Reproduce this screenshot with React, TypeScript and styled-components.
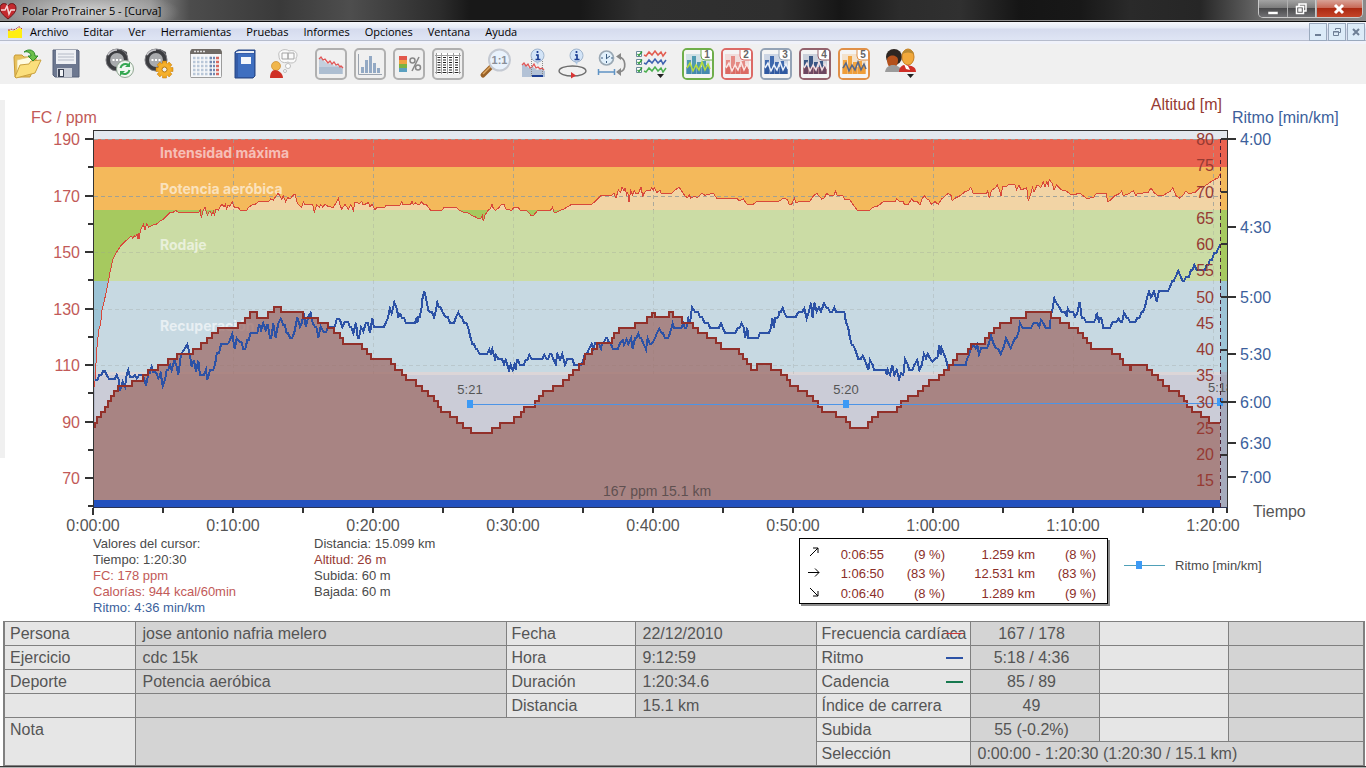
import React from "react";
import styled, { createGlobalStyle } from "styled-components";

const GlobalStyle = createGlobalStyle`
  * { box-sizing: border-box; }
  body {
    margin: 0;
    background: #ffffff;
    font-family: "Liberation Sans", Arial, sans-serif;
    color: #555555;
  }
  button { font: inherit; color: inherit; padding: 0; border: 0; background: none; cursor: default; }
`;

const UI_FONT = `"Open Sans", "Segoe UI", sans-serif`;

const Page = styled.div`
  display: flex;
  flex-direction: column;
  min-height: 100vh;
  overflow: hidden;
`;

/* ---------- window chrome ---------- */

const TitleBar = styled.header`
  display: flex;
  align-items: flex-start;
  height: 22px;
  padding-right: 3px;
  border-bottom: 1px solid #0c0c0c;
  box-shadow: inset 0 -1px 0 #8d8d8d;
  background:
    radial-gradient(ellipse 90px 22px at 90px 12px, rgba(235, 235, 235, 0.75), rgba(200, 200, 200, 0.45) 60%, transparent 100%),
    linear-gradient(90deg, #8a8a8a 0, #8e8e8e 150px, #4c4c4c 190px, #3a3a3a 280px, #4e4e4e 350px, #2c2c2c 440px, #181818 470px,
      #181818 580px, #303030 640px, #2e2e2e 780px, #161616 840px, #2c2c2c 900px, #303030 960px, #151515 1020px, #181818 1080px,
      #2a2a2a 1130px, #262626 1200px, #6a6a6a 1262px, #8a8a8a 1366px);
`;

const Title = styled.h1`
  display: flex;
  align-items: center;
  flex: 1;
  gap: 5px;
  height: 21px;
  margin: 0;
  font: 400 11px/20px ${UI_FONT};
  color: #000000;
`;

const WindowButtons = styled.div`
  display: flex;
  height: 18px;
  border: 1px solid #c9c9c9;
  border-top: 0;
  border-radius: 0 0 5px 5px;
  overflow: hidden;
`;

const WindowButton = styled.button<{ $close?: boolean }>`
  display: flex;
  align-items: center;
  justify-content: center;
  width: ${(p) => (p.$close ? 47 : 28)}px;
  height: 17px;
  border-left: ${(p) => (p.$close ? "1px solid #c9c9c9" : "0")};
  background: ${(p) =>
    p.$close
      ? "linear-gradient(#d8a296 0, #c86a58 45%, #ac2a12 50%, #c44428 100%)"
      : "linear-gradient(#a3a3a3 0, #7d7d7d 45%, #4a4a4c 50%, #717174 100%)"};
  & + & { box-shadow: inset 1px 0 0 #b0b0b0; }
`;

const MenuBar = styled.nav`
  display: flex;
  align-items: center;
  height: 22px;
  padding-left: 8px;
  background: linear-gradient(#f6f8fc 0, #e4eaf6 6px, #d5dbee 7px, #dfe5f4 18px, #b6bccc 18px, #b6bccc 19px, #f0f2fa 19px, #f0f2fa 22px);
`;

const MenuList = styled.div`
  display: flex;
  flex: 1;
  gap: 15px;
  margin-left: 8px;
  padding-bottom: 2px;
`;

const MenuItem = styled.button`
  height: 18px;
  font: 400 11px/18px ${UI_FONT};
  color: #000000;
`;

const MdiButtons = styled.div`
  display: flex;
  align-self: flex-start;
  gap: 1px;
  padding-top: 1px;
  padding-right: 1px;
`;

const MdiButton = styled.button`
  display: flex;
  align-items: center;
  justify-content: center;
  width: 18px;
  height: 18px;
  border: 1px solid #9aa9bd;
  background: #dcebf8;
`;

const Toolbar = styled.div`
  display: flex;
  align-items: center;
  gap: 15px;
  height: 40px;
  padding-left: 11px;
  background: #f0f0f0;
`;

const ToolGroup = styled.div<{ $spaced?: boolean }>`
  display: flex;
  gap: 7px;
  margin-right: ${(p) => (p.$spaced ? 7 : 0)}px;
`;

const ToolButton = styled.button<{ $frame?: string }>`
  width: 32px;
  height: 32px;
  border: ${(p) => (p.$frame ? `2px solid ${p.$frame}` : "0")};
  border-radius: 5px;
  overflow: hidden;
  svg { display: block; margin: ${(p) => (p.$frame ? "-2px" : "0")}; }
`;

function Icon({ children, size = 32 }: { children: React.ReactNode; size?: number }) {
  return (
    <svg width={size} height={size} viewBox="0 0 32 32" fill="none" aria-hidden="true">
      {children}
    </svg>
  );
}

const OpenIcon = (
  <Icon>
    <path d="M3 9l1-2h7l2 2h12v6l-6 14H4z" fill="#e8c05a" stroke="#c79a35" />
    <path d="M6 12l17-4 2 14-19 6z" fill="#fffbe0" stroke="#e0c878" strokeWidth=".7" />
    <path d="M4 29L9 17l9-1 2-3 10-1-6 13-19 5z" fill="#fbdf7c" stroke="#c9a13f" />
    <path d="M13 4c5-4 11-2 11 4h3l-5 5-5-5h3c0-3-3-5-7-4z" fill="#6cc04a" stroke="#2f8a2a" />
  </Icon>
);
const SaveIcon = (
  <Icon>
    <path d="M3 2h25l1 1v26H5l-2-2z" fill="#6d7890" stroke="#566078" />
    <path d="M6 2h20v14H6z" fill="#eef0f4" />
    <path d="M8 6h16M8 9h16M8 12h16" stroke="#b4bac6" />
    <path d="M7 20h15v9H7z" fill="#c9ced8" />
    <path d="M8 21h6v8H8z" fill="#3c4456" />
    <path d="M10 22h3v6h-3z" fill="#f2f4f7" />
  </Icon>
);
const watch = (
  <>
    <path d="M9 3l8-2 6 3 1 16-9 3-8-3z" fill="#55565a" />
    <circle cx="13" cy="12" r="11" fill="#3c3d41" stroke="#7d7d82" />
    <circle cx="13" cy="12" r="7" fill="#a9abae" />
    <path d="M8.500 12h2M12 12h2M15.500 12h2" stroke="#fff" strokeWidth="2" />
    <path d="M4 7c2-3 5-5 9-5" stroke="#c8c8cc" strokeWidth="1.500" />
  </>
);
const SyncIcon = (
  <Icon>
    {watch}
    <circle cx="21" cy="21" r="8.500" fill="#f1f7f1" stroke="#8fa691" />
    <path d="M16.500 20a5 5 0 0 1 8-3M25.500 22a5 5 0 0 1-8 3" stroke="#35a852" strokeWidth="2" />
    <path d="M26 14v5h-5zM16 28v-5h5z" fill="#35a852" />
  </Icon>
);
const SettingsIcon = (
  <Icon>
    {watch}
    {[0, 45, 90, 135].map((a) => (
      <path key={a} d="M19.500 13h4v17h-4z" fill="#f0a51c" stroke="#c27a0c" strokeWidth=".5" transform={`rotate(${a} 21.500 21.500)`} />
    ))}
    <circle cx="21.500" cy="21.500" r="6.500" fill="#f5b02c" />
    <circle cx="21.500" cy="21.500" r="2.500" fill="#efefef" stroke="#b87810" />
  </Icon>
);
const CalendarIcon = (
  <Icon>
    <path d="M.500 1.500h31v28h-31z" fill="#f6f7f9" stroke="#9c9c9c" />
    <path d="M0 1h32v5H0z" fill="#706b66" />
    <path d="M4 3.500h11" stroke="#ddd" strokeWidth="1.500" strokeDasharray="2 1" />
    {[10, 14, 18, 22, 26].map((y) => (
      <g key={y} strokeWidth="2.500">
        <path d={`M3 ${y}h18`} stroke="#b9c7d8" strokeDasharray="2.500 1.500" />
        <path d={`M20 ${y}h5`} stroke="#7288b0" strokeDasharray="2 1" />
        <path d={`M26 ${y}h3`} stroke="#d76a62" />
      </g>
    ))}
  </Icon>
);
const BookIcon = (
  <Icon>
    <path d="M6 4l3-2h17v26l-2 2H6z" fill="#345ca8" stroke="#274784" />
    <path d="M9 6h16v23H9z" fill="#3f6fc0" />
    <path d="M7 4l3-1h15v2H7z" fill="#e9edf4" />
    <path d="M12 9h10v7H12z" fill="#f4f7fb" />
  </Icon>
);
const CoachIcon = (
  <Icon>
    <circle cx="8" cy="18" r="4.500" fill="#f0b64c" stroke="#c98a2c" strokeWidth=".7" />
    <path d="M2 30c0-5 2-8 5-8s8 3 8 8z" fill="#cf3026" />
    <path d="M11 8c-2-6 7-8 10-5 6-2 10 3 7 7 1 5-5 6-8 4-5 2-9-1-9-6z" fill="#fafafa" stroke="#bdbdbd" />
    <path d="M14 5h6v6h-6zM20 5h6v6h-6z" stroke="#a4a4a4" />
    <circle cx="20" cy="18" r="2.500" fill="#fff" stroke="#bdbdbd" />
    <circle cx="17" cy="23" r="1.500" fill="#fff" stroke="#bdbdbd" />
  </Icon>
);
const AreaIcon = (
  <Icon>
    <path d="M4 11l3-1 3 4 3 2 4-1 2 3 3-1 5 4v5H4z" fill="#c3cfdd" />
    <path d="M4 19h24v7H4z" fill="#9fb2c9" opacity=".6" />
    <path d="M4 11l2-2 2 3 2-1 3 4 2-2 2 3 2-2 2 3 2-1 2 3 1-1 2 2" stroke="#e25555" strokeWidth="1.300" />
  </Icon>
);
const HistogramIcon = (
  <Icon>
    <path d="M4.500 6v20.500H28" stroke="#9aa3af" />
    <path d="M7 19h3v6H7zM11 12h3v13h-3zM15 8h3v17h-3zM19 15h3v10h-3zM23 20h3v5h-3z" fill="#93a9c4" />
  </Icon>
);
const ZonesIcon = (
  <Icon>
    <path d="M6 8h8v4H6z" fill="#e2584c" />
    <path d="M6 12h8v4H6z" fill="#f0a040" />
    <path d="M6 16h8v4H6z" fill="#7cb342" />
    <path d="M6 20h8v4H6z" fill="#5aa0c0" />
    <circle cx="19.500" cy="12.500" r="2.500" stroke="#888" strokeWidth="1.500" />
    <circle cx="25" cy="19.500" r="2.500" stroke="#888" strokeWidth="1.500" />
    <path d="M26 9l-7 14" stroke="#888" strokeWidth="1.500" />
  </Icon>
);
const TableIcon = (
  <Icon>
    <path d="M4 5h24v21H4z" fill="#fff" />
    <path d="M4.500 5v21M9.500 5v21M15.500 5v21M21.500 5v21M27.500 5v21M3 7.500h26M3 24.500h26" stroke="#a0a0a0" />
    <path d="M7 9v16M12.500 9v16M18.500 9v16M24.500 9v16" stroke="#222" strokeWidth="3" strokeDasharray="1 1.500" />
  </Icon>
);
const ZoomIcon = (
  <Icon>
    <path d="M4 27l8-8" stroke="#9a6228" strokeWidth="5" strokeLinecap="round" />
    <path d="M4 26l8-8" stroke="#e0a860" strokeWidth="1.500" />
    <circle cx="20.500" cy="12" r="10.500" fill="#e9f2fc" stroke="#c4c9d2" strokeWidth="2" />
    <text x="20.500" y="16" fontSize="11" fontWeight="700" fill="#8a8f99" textAnchor="middle" fontFamily="Liberation Sans">1:1</text>
  </Icon>
);
const infoBubble = (
  <>
    <path d="M17 13l3 4 1-4z" fill="#b4cce8" />
    <circle cx="19.500" cy="7.500" r="6.500" fill="#d3e4f7" stroke="#a0b4cc" />
    <path d="M19.500 3v2M18 7H20v4.500M17.500 11.500h5" stroke="#1d3f94" strokeWidth="1.700" />
  </>
);
const InfoCurveIcon = (
  <Icon>
    <path d="M4 17l3-1 4 4 4-1 4 3 4-1 4 2v6H4z" fill="#b3c2d6" />
    <path d="M4 17l2-2 2 3 2-2 2 4 2-1 2-3 2 4 2-1 2 2 2-1 2 2" stroke="#e25555" strokeWidth="1.300" />
    <path d="M13.500 7v22M24.500 7v22" stroke="#888" strokeDasharray="1 1" />
    <path d="M14 28h11" stroke="#1d3f94" strokeWidth="2" />
    {infoBubble}
  </Icon>
);
const InfoLapIcon = (
  <Icon>
    <ellipse cx="15.500" cy="23" rx="13.500" ry="5" stroke="#6d6d6d" strokeWidth="1.300" />
    <path d="M14 24l5 3.500-5 3z" fill="#d93434" />
    {infoBubble}
  </Icon>
);
const TimeDistanceIcon = (
  <Icon>
    <circle cx="10.500" cy="10" r="7" fill="#e1f0fb" stroke="#9aa8b4" strokeWidth="1.700" />
    <path d="M10.500 11v-5M10 11l4-3M5 10h2M15 10h2M10.500 15v-2" stroke="#3d5d80" />
    <path d="M2.500 21v6M18.500 21v6M2 24h17" stroke="#5f93c4" strokeWidth="1.500" />
    <path d="M23 9c7 1 8 13 1 15" stroke="#888" strokeWidth="1.700" />
    <path d="M25 5v7l-5-3.500zM25 20v8l-5-4z" fill="#888" />
  </Icon>
);
const CurvesIcon = (
  <Icon>
    {[
      ["#e25c50", 5],
      ["#3f62b0", 13],
      ["#4caf50", 21],
    ].map(([c, y]) => (
      <g key={c} transform={`translate(1 ${Number(y) - 3})`}>
        <path d="M.500 1.500h5v5h-5z" fill="#fff" stroke="#6a8a9a" />
        <path d="M1.500 4l1.500 1.500 3-4" stroke="#2d9a3a" strokeWidth="1.300" />
        <path d="M8 5l2 1 3-4 3 3 3-4 3 4 3-3 2 4 3-4" stroke={String(c)} strokeWidth="1.500" />
      </g>
    ))}
    <path d="M22 26h7l-3.500 4z" fill="#222" />
  </Icon>
);

const VIEWS = [
  { frame: "#6fae4a", bar: "#4f9ab0", dark: "#3f7fae", line: "#b5dc3c" },
  { frame: "#dc6a66", bar: "#e58a84", dark: "#d3574f", line: "#fbe6e4" },
  { frame: "#94a3b6", bar: "#3e68ad", dark: "#27509a", line: "#e9f0fa" },
  { frame: "#93626d", bar: "#3a5684", dark: "#8c3c48", line: "#f1dfe2" },
  { frame: "#e09048", bar: "#f2a541", dark: "#ec9a34", line: "#56688a" },
];

const CoachesIcon = (
  <Icon>
    <circle cx="9" cy="9" r="8" fill="#2d2622" />
    <path d="M2 12c0-6 11-6 11 0s-3 8-6 8-5-4-5-8z" fill="#b4511c" />
    <path d="M0 24c1-5 4-7 8-7s8 2 9 7z" fill="#9b9b9b" />
    <ellipse cx="23" cy="9" rx="6" ry="8" fill="#f1a93c" stroke="#c67f22" />
    <path d="M17 6c1-6 11-6 12 0-4-2-8-2-12 0z" fill="#b98a34" />
    <path d="M14 24c0-5 4-8 8-7s9 1 9 7z" fill="#cf2f27" />
    <path d="M19 16l4 2 2 4-4-1z" fill="#fff" />
    <path d="M22 26h7l-3.500 4z" fill="#222" />
  </Icon>
);

const TOOLS: { name: string; icon: React.ReactNode; frame?: string }[][] = [
  [
    { name: "Abrir", icon: OpenIcon },
    { name: "Guardar", icon: SaveIcon },
  ],
  [
    { name: "Transferir", icon: SyncIcon },
    { name: "Configurar", icon: SettingsIcon },
  ],
  [
    { name: "Calendario", icon: CalendarIcon },
    { name: "Diario", icon: BookIcon },
    { name: "Asesor", icon: CoachIcon },
  ],
  [
    { name: "Curva", icon: AreaIcon, frame: "#b0b0b0" },
    { name: "Distribución", icon: HistogramIcon, frame: "#b0b0b0" },
    { name: "Zonas", icon: ZonesIcon, frame: "#b0b0b0" },
    { name: "Tabla", icon: TableIcon, frame: "#b0b0b0" },
  ],
  [
    { name: "Escala", icon: ZoomIcon },
    { name: "Información", icon: InfoCurveIcon },
    { name: "Vueltas", icon: InfoLapIcon },
    { name: "Tiempo y distancia", icon: TimeDistanceIcon },
    { name: "Curvas", icon: CurvesIcon },
  ],
  VIEWS.map((v, i) => ({
    name: `Vista ${i + 1}`,
    frame: v.frame,
    icon: (
      <Icon>
        <path d="M2 2h28v28H2z" fill="#f4f4f4" />
        <path d="M4 6h24v20H4z" fill={v.bar} opacity=".22" />
        <path d="M5 12h4v14H5zM10 8h4v18h-4zM15 14h4v12h-4zM20 13h4v13h-4zM24 17h3v9h-3z" fill={v.bar} />
        <path d="M4 19h24v7H4z" fill={v.dark} opacity=".6" />
        <path d="M5 20l3-5 3 8 3-6 3 5 3-8 3 8 3-6 2 5" stroke={v.line} strokeWidth="1.500" />
        <path d="M19 0h13v12h-9q-4 0-4-4z" fill="#fff" stroke={v.frame} />
        <text x="25" y="10" fontSize="10" fontWeight="700" fill="#666" textAnchor="middle" fontFamily="Liberation Sans">
          {i + 1}
        </text>
      </Icon>
    ),
  })),
  [{ name: "Personas", icon: CoachesIcon }],
];

/* ---------- chart ---------- */

const ChartArea = styled.main`
  svg { display: block; width: 100%; height: auto; }
`;

const AxisText = styled.text<{ $size?: number }>`
  font-family: "Liberation Sans", Arial, sans-serif;
  font-size: ${(p) => p.$size ?? 16}px;
`;

const ZoneText = styled.text`
  font-family: Inter, sans-serif;
  font-size: 14px;
  font-weight: 700;
  fill: rgba(255, 255, 255, 0.6);
`;

type Point = [number, number];

/* Samples are stored in thirds of a unit, relative to the origin of their block. */
const block = (ox: number, oy: number, samples: string): Point[] => {
  const n = samples.trim().split(/\s+/).map(Number);
  const out: Point[] = [];
  for (let i = 0; i < n.length; i += 2) out.push([ox + n[i] / 3, oy + n[i + 1] / 3]);
  return out;
};

const f = (v: number) => v.toFixed(1);
const linePath = (pts: Point[]) => "M" + pts.map(([x, y]) => `${f(x)} ${f(y)}`).join("L");
const stepPath = (pts: Point[]) => `M${f(pts[0][0])} ${f(pts[0][1])}` + pts.slice(1).map(([x, y]) => `H${f(x)}V${f(y)}`).join("");

/* Holds the last value over a long gap, then moves to the next sample over two units. */
const holdPath = (pts: Point[]) =>
  `M${f(pts[0][0])} ${f(pts[0][1])}` +
  pts.slice(1).map(([x, y], i) => `${x - pts[i][0] > 3 ? `H${f(x - 2)}` : ""}L${f(x)} ${f(y)}`).join("");

const heartRate: Point[] = [
  ...block(0, 90, "284 890 290 780 296 720 302 700 306 660 312 635 318 610 326 570 330 545 334 530 338 508 345 495 354 480 362 468 380 450 387 445 393 437 398 445 402 437 407 440 411 432 413 447 415 430 417 446 420 430 424 415 430 402 435 420 440 402 446 412 458 405 470 402 480 393 490 388 500 378 510 367 520 367 527 361 535 367 597 367 601 360 604 384 609 362 615 352 622 376 630 362 635 375 640 363 643 375 648 358 655 360 665 343 672 350 676 343 680 358 684 344 688 350 697 335 703 352 715 352 720 361 740 361 745 352 757 345 765 343 775 336 808 333 812 326 820 330 828 318 835 310 845 327 850 318 857 335 863 322 870 327 878 317 885 312 892 340 905 352 910 335 914 343 938 343 940 355 943 367 950 345 958 352 962 343 968 352 975 343 985 350 1000 352 1007 340 1015 325 1020 345 1025 358 1035 343 1045 358 1052 343 1060 361 1065 336 1078 340 1085 335 1090 345 1105 338 1110 350 1117 343 1125 361 1130 352 1155 352 1158 345 1200 345"),
  ...block(400, 180, "5 65 8 73 32 73 36 63 40 73 48 68 52 73 60 72 65 65 70 72 80 75 92 91 125 91 133 82 168 82 180 92 190 97 205 99 215 106 225 110 232 115 243 115 247 107 250 124 255 105 260 97 265 90 270 88 276 73 280 85 286 91 295 85 305 73 312 73 318 88 335 91 342 82 355 82 360 90 380 92 392 105 402 105 412 92 452 90 457 82 462 97 470 97 478 92 490 88 500 82 515 73 575 73 590 60 603 46 635 46 642 40 648 54 655 30 662 38 666 22 672 32 675 23 680 45 683 35 687 66 692 32 697 45 703 32 708 42 715 40 723 22 728 48 735 35 742 30 750 32 755 22 760 30 763 22 770 38 780 30 783 40 815 40 825 30 838 22 848 38 855 48 862 53 868 45 872 54 885 48 892 54 905 40 915 46 940 40 950 55 1010 55 1018 63 1030 57 1040 72 1060 73 1070 65 1135 65 1150 55 1162 58 1167 72 1175 73 1183 55 1187 67 1200 65"),
  ...block(800, 90, "10 333 30 333 40 318 50 310 57 318 65 327 72 325 80 310 90 318 102 316 107 302 111 316 128 316 133 327 148 327 160 345 172 361 210 361 217 352 230 350 240 343 250 335 285 335 290 326 297 333 310 335 313 343 325 343 335 326 342 335 350 333 360 345 367 325 374 318 380 327 388 330 393 343 405 335 415 343 425 327 435 318 445 310 453 316 457 333 465 325 480 317 495 305 505 302 512 292 520 310 560 310 563 302 568 325 575 300 585 295 592 285 598 300 603 317 608 290 620 290 624 284 645 285 650 300 657 285 663 300 680 293 685 333 693 310 697 292 702 305 712 285 722 292 730 276 735 290 740 275 745 285 748 268 758 283 762 300 770 285 785 300 798 303 815 315"),
  ...block(1080, 90, "0 310 20 325 40 323 48 312 78 310 83 335 92 330 105 317 120 310 125 303 130 317 145 312 160 302 168 317 172 310 205 308 213 293 222 308 235 317 250 317 262 308 270 305 278 293 288 317 300 325 312 312 318 302 325 310 345 308 360 293 375 288 390 277 405 268 415 263 421 250"),
];

const altitude: Point[] = [
  ...block(0, 320, "282 320 284 310 292 292 302 275 314 262 323 243 333 227 343 213 355 198 395 182 430 166 445 151 473 135 503 118 530 101 580 86 603 70 620 55 637 39 653 23 715 8 735 -7 750 -24 770 -7 805 -24 823 -40 843 -24 908 -7 955 8 985 23 1003 39 1020 55 1030 71 1087 86 1100 102 1113 118 1172 133 1185 150"),
  ...block(400, 180, "5 585 18 600 48 617 66 632 85 648 103 663 115 680 122 695 150 711 170 728 190 743 213 759 276 743 300 728 343 711 362 695 371 680 405 663 418 648 430 632 460 617 490 600 506 585 520 570 537 553 551 537 556 521 575 506 592 490 635 475 642 460 658 443 705 429 740 412 757 398 765 412 808 395 820 412 845 429 878 443 895 458 922 474 948 490 963 506 1018 521 1030 537 1040 553 1052 570 1072 553 1113 570 1143 585 1160 600 1170 617 1193 632"),
  ...block(800, 90, "22 918 38 934 55 950 67 965 107 981 137 997 149 1013 204 997 215 981 233 965 292 950 303 934 323 918 355 903 368 887 387 870 418 855 433 840 448 825 460 809 470 792 505 777 513 762 555 745 567 730 583 714 600 698 633 683 678 666 752 683 780 698 807 713 833 729"),
  ...block(1080, 90, "8 744 20 760 32 776 95 792 120 808 130 824 150 840 153 824 200 839 217 855 235 871 250 887 267 903 297 918 312 934 320 950 335 966 362 982 388 998 420 998"),
];

const pace: Point[] = [
  ...block(0, 320, "284 180 298 165 310 153 320 165 328 178 350 165 357 180 360 212 368 185 375 200 380 165 385 150 390 170 405 165 410 175 418 165 432 175 438 198 445 160 455 140 460 155 470 160 475 175 482 160 488 198 495 180 500 150 510 135 515 150 523 120 530 140 535 165 542 110 548 95 555 85 562 73 568 95 575 140 582 120 588 155 595 122 600 165 618 150 622 180 630 150 645 135 650 100 663 73 685 70 690 60 697 42 704 87 710 55 718 65 730 87 742 60 752 38 778 12 783 30 790 10 797 30 803 12 810 53 820 10 827 53 835 10 842 -4 850 15 860 40 870 53 883 38 892 -8 900 20 905 10 912 -22 917 20 925 -10 932 -22 938 10 945 20 955 53 962 20 970 35 985 20 1000 20 1010 -2 1018 -4 1022 5 1027 22 1035 5 1050 22 1060 40 1068 8 1073 53 1083 22 1090 35 1097 10 1110 38 1117 -5 1122 22 1157 10 1163 -5 1170 -35 1175 -20 1183 -53 1190 -35 1195 -10 1200 -18"),
  ...block(400, 180, "0 400 5 413 18 429 50 413 52 429 55 412 65 380 68 350 73 333 80 365 85 390 92 397 102 412 106 400 112 368 117 382 128 397 137 412 150 429 168 412 175 397 182 412 192 429 205 445 212 475 217 492 228 508 238 521 268 508 273 521 277 508 285 537 288 525 295 537 312 553 317 540 322 555 327 570 332 555 338 570 343 555 348 570 350 540 360 555 377 540 388 525 395 537 433 525 440 537 450 522 460 537 467 553 472 522 480 540 487 522 495 555 502 537 523 555 550 540 555 521 567 506 575 492 580 506 585 490 603 506 606 490 617 475 628 490 638 506 660 490 668 480 672 495 680 478 685 492 693 475 698 506 705 475 715 460 720 475 730 490 738 508 743 475 750 492 757 490 765 475 770 460 778 447 785 460 795 475 810 460 818 430 823 445 850 430 855 445 865 415 870 430 876 382 885 395 900 412 913 428 930 443 963 430 968 443 975 458 1013 443 1025 430 1032 443 1035 475 1042 443 1045 475 1080 458 1113 443 1117 415 1122 445 1125 415 1135 412 1138 397 1148 383 1153 397 1160 412 1193 400 1198 395"),
  ...block(800, 90, "0 665 13 655 20 685 27 665 33 638 38 685 43 638 50 665 57 652 63 665 72 640 80 655 90 665 103 652 108 665 133 665 135 680 138 697 145 715 150 745 155 765 165 777 170 792 175 807 188 797 193 807 200 825 205 840 210 810 218 825 222 840 257 840 260 855 263 840 270 855 277 825 283 855 290 840 297 868 303 850 310 855 315 808 322 820 328 840 343 825 352 810 358 840 365 825 372 792 378 805 383 792 390 805 398 815 407 805 418 765 422 795 425 775 432 793 438 808 445 838 450 825 498 825 500 810 508 792 513 775 520 765 527 775 532 765 537 792 543 775 567 760 573 735 580 760 588 775 595 777 602 792 610 775 618 745 625 760 632 775 638 760 645 745 655 730 660 700 667 713 700 700 718 710 723 690 730 700 737 713 750 713 752 680 757 660 763 625 770 640 778 652 785 665 800 680 803 655 808 665 825 680 832 670 838 640"),
  ...block(1080, 90, "0 640 5 683 18 697 48 683 50 668 57 697 60 685 70 713 97 697 115 685 122 697 132 668 140 683 150 697 172 683 185 665 195 650 202 620 207 605 213 622 222 605 230 635 237 603 270 590 277 573 287 560 295 543 302 560 308 573 318 560 333 540 343 525 350 540 380 525 390 510 402 490 415 475 422 462"),
];

const BANDS = [
  { y: 131, h: 8, base: "#e3e8ee", light: "#e3e8ee" },
  { y: 139, h: 28, base: "#ea6350", light: "#ea6350" },
  { y: 167, h: 43, base: "#f4b95b", light: "#f2d4a5" },
  { y: 210, h: 71, base: "#a6c95f", light: "#cbdca5" },
  { y: 281, h: 91, base: "#9dc4d6", light: "#c7d9e2" },
  { y: 372, h: 3, base: "#a9b2c4", light: "#dcd6d8" },
  { y: 375, h: 133, base: "#a6abbd", light: "#cbccd7" },
];

const HR_LABELS = [190, 170, 150, 130, 110, 90, 70];
const ALT_LABELS = [80, 75, 70, 65, 60, 55, 50, 45, 40, 35, 30, 25, 20, 15];
const PACE_LABELS: [string, number][] = [
  ["4:00", 139], ["4:30", 227], ["5:00", 297], ["5:30", 354], ["6:00", 402], ["6:30", 443], ["7:00", 477],
];
const TIME_LABELS = ["0:00:00", "0:10:00", "0:20:00", "0:30:00", "0:40:00", "0:50:00", "1:00:00", "1:10:00", "1:20:00"];

const hrY = (bpm: number) => Math.round(139 + (190 - bpm) * 2.825);
const timeX = (minutes: number) => Math.round(93 + minutes * 14);

const HR = "#c25a58";
const ALT = "#963a33";
const PACE = "#3c5f9c";
const INK = "#333333";
const TEXT = "#555555";

function Chart() {
  const grid = "#9a9f9a";
  return (
    <ChartArea>
      <svg viewBox="0 84 1366 450" role="img" aria-label="Curva de frecuencia cardíaca, altitud y ritmo">
        <defs>
          <clipPath id="hr"><path d={`${linePath(heartRate)}V508H94Z`} /></clipPath>
          <clipPath id="alt"><path d={`${stepPath(altitude)}V508H94Z`} /></clipPath>
          <clipPath id="plot"><path d="M94 131H1227V508H94Z" /></clipPath>
        </defs>
        <path d="M0 100H5V458H0Z" fill="#f0f0f0" />

        {BANDS.map((b) => <rect key={b.y} x="94" y={b.y} width="1133" height={b.h} fill={b.base} />)}
        <g clipPath="url(#hr)">
          {BANDS.map((b) => <rect key={b.y} x="94" y={b.y} width="1133" height={b.h} fill={b.light} />)}
        </g>

        <g stroke={grid} strokeDasharray="4 3" shapeRendering="crispEdges">
          {HR_LABELS.slice(0, 5).map((v, i) => (
            <path key={v} d={`M94 ${hrY(v) + 0.5}H1220`} opacity={i < 2 ? 0.9 : 0.3} />
          ))}
          {TIME_LABELS.slice(1).map((t, i) => (
            <g key={t}>
              <path d={`M${timeX(10 * (i + 1)) + 0.5} 139V210`} opacity=".8" />
              <path d={`M${timeX(10 * (i + 1)) + 0.5} 210V374`} opacity=".3" />
            </g>
          ))}
        </g>

        <ZoneText x="160" y="158">Intensidad máxima</ZoneText>
        <ZoneText x="160" y="194">Potencia aeróbica</ZoneText>
        <ZoneText x="160" y="250">Rodaje</ZoneText>
        <ZoneText x="160" y="331">Recuperación</ZoneText>

        <path d={`${stepPath(altitude)}V508H94Z`} fill="#9c6a66" fillOpacity=".74" />
        <path d="M94 374H1220V500H94Z" fill="#a88483" clipPath="url(#alt)" />

        <path d={linePath(heartRate)} fill="none" stroke="#d8483a" shapeRendering="crispEdges" />
        <path d={holdPath(pace)} fill="none" stroke="#2c52a6" strokeWidth="2" shapeRendering="crispEdges" />
        <path d={stepPath(altitude)} fill="none" stroke="#92302a" strokeWidth="2" shapeRendering="crispEdges" />

        <g clipPath="url(#plot)">
          <path d="M470 404.500H940M940 403.500H1220" fill="none" stroke="#4c94e6" shapeRendering="crispEdges" />
          {[[470, 404], [846, 404], [1220, 402]].map(([x, y]) => (
            <rect key={x} x={x - 3} y={y - 4} width="6" height="8" fill="#3d9af5" />
          ))}
          <AxisText $size={13} x="470" y="394" textAnchor="middle" fill={TEXT}>5:21</AxisText>
          <AxisText $size={13} x="846" y="394" textAnchor="middle" fill={TEXT}>5:20</AxisText>
          <AxisText $size={13} x="1208" y="392" fill={TEXT}>5:18</AxisText>
        </g>

        <path d="M94 500H1220V507H94Z" fill="#2351be" />
        <AxisText $size={14} x="657" y="496" textAnchor="middle" fill="#5f5050">167 ppm 15.1 km</AxisText>

        <g shapeRendering="crispEdges">
          <path d="M1220.500 139V508" stroke="#4b1f35" strokeDasharray="4 3" />
          <path d="M93.500 508V130.500H1227.500V508" fill="none" stroke={INK} />
          <path d="M93 507.500H1228" stroke="#2b3352" />
          <g stroke={INK} strokeWidth="2">
            {HR_LABELS.map((v) => <path key={v} d={`M85 ${hrY(v)}H93`} />)}
            {HR_LABELS.map((v) => <path key={v} d={`M88 ${hrY(v - 10)}H93`} />)}
            {TIME_LABELS.map((t, i) => <path key={t} d={`M${timeX(i * 10)} 508V${i ? 513 : 515}`} />)}
            {TIME_LABELS.slice(1).map((t, i) => <path key={t} d={`M${timeX(i * 10 + 5)} 508V513`} />)}
            <path d="M1227 508V513" />
            {[139, 192, 244, 297, 350, 402, 455].map((y) => <path key={y} d={`M1221 ${y}H1227`} />)}
            {PACE_LABELS.map(([t, y]) => <path key={t} d={`M1227 ${y}H1236`} />)}
          </g>
        </g>

        <AxisText x="31" y="123" fill={HR}>FC / ppm</AxisText>
        <AxisText x="1222" y="110" textAnchor="end" fill={ALT}>Altitud [m]</AxisText>
        <AxisText x="1232" y="123" fill={PACE}>Ritmo [min/km]</AxisText>
        <AxisText x="1253" y="517" fill={TEXT}>Tiempo</AxisText>
        {HR_LABELS.map((v) => <AxisText key={v} x="80" y={hrY(v) + 6} textAnchor="end" fill={HR}>{v}</AxisText>)}
        {ALT_LABELS.map((v, i) => (
          <AxisText key={v} x="1214" y={Math.round(145 + i * 26.25)} textAnchor="end" fill={ALT}>{v}</AxisText>
        ))}
        {PACE_LABELS.map(([t, y]) => <AxisText key={t} x="1240" y={y + 6} fill={PACE}>{t}</AxisText>)}
        {TIME_LABELS.map((t, i) => (
          <AxisText key={t} x={timeX(i * 10)} y="531" textAnchor="middle" fill={TEXT}>{t}</AxisText>
        ))}
      </svg>
    </ChartArea>
  );
}

/* ---------- cursor values, slopes and legend ---------- */

const InfoRow = styled.section`
  display: grid;
  grid-template-columns: 221fr 485fr 325fr 242fr;
  align-items: start;
  height: 87px;
  padding: 2px 0 0 93px;
  font-size: 13px;
`;

const ValueList = styled.ul`
  margin: 0;
  padding: 0;
  list-style: none;
  line-height: 16px;
  white-space: nowrap;
`;

const Value = styled.li<{ $color?: string }>`
  color: ${(p) => p.$color ?? "#4a4a4a"};
`;

const SlopeTable = styled.table`
  width: 309px;
  height: 66px;
  margin-top: 2px;
  padding: 6px 11px 0 4px;
  border: 1px solid #000000;
  box-shadow: 2px 2px 0 #8c8c8c;
  border-spacing: 0;
  table-layout: fixed;
  color: #8a2e28;
  line-height: 19px;
  td { padding: 0; text-align: right; vertical-align: top; white-space: nowrap; }
  td:first-child { text-align: left; }
  svg { display: block; margin: 1px 0 0 2px; }
`;

const Legend = styled.div`
  display: flex;
  align-items: center;
  gap: 10px;
  height: 58px;
  color: #4a4a4a;
`;

const SLOPES = [
  { d: "M4 10L12 2M7 2h5v5", name: "Subida", cells: ["0:06:55", "(9 %)", "1.259 km", "(8 %)"] },
  { d: "M2 7.500h11M9 3.500l4 4-4 4", name: "Llano", cells: ["1:06:50", "(83 %)", "12.531 km", "(83 %)"] },
  { d: "M4 3l8 8M12 6v5H7", name: "Bajada", cells: ["0:06:40", "(8 %)", "1.289 km", "(9 %)"] },
];

/* ---------- summary table ---------- */

const Summary = styled.table`
  width: calc(100% - 5px);
  margin: 0 2px 0 3px;
  border-collapse: collapse;
  table-layout: fixed;
  border: 2px solid #808080;
  border-top-width: 1px;
  border-bottom-width: 1px;
  font-size: 16px;
  line-height: 23px;
  th, td {
    position: relative;
    height: 24px;
    padding: 0 6px 0 7px;
    border: 1px solid #808080;
    font-weight: 400;
    text-align: left;
    vertical-align: top;
    white-space: nowrap;
    background: #d4d4d4;
  }
  th { background: #e6e6e6; padding-left: 5px; }
`;

const Centered = styled.td`
  && { text-align: center; padding: 0 6px 0 0; }
`;

const Blank = styled.td`
  && { background: #e6e6e6; }
`;

const Swatch = styled.span<{ $color: string; $thin?: boolean }>`
  position: absolute;
  right: 7px;
  top: 11px;
  width: 17px;
  height: ${(p) => (p.$thin ? 1 : 2)}px;
  background: ${(p) => p.$color};
`;

const TaskbarEdge = styled.footer`
  height: 2px;
  border-top: 1px solid #3a3a3a;
  background: #b4b4b4;
`;

const COLUMNS = [131, 371, 129, 181, 154, 129, 129, 136];
const MENUS = ["Archivo", "Editar", "Ver", "Herramientas", "Pruebas", "Informes", "Opciones", "Ventana", "Ayuda"];

export default function App() {
  return (
    <Page>
      <GlobalStyle />
      <TitleBar>
        <Title>
          <svg width="17" height="18" viewBox="0 0 17 18" aria-hidden="true">
            <path d="M8 17C3 13 0 10 0 6c0-5 6-6 8-2 2-4 8-3 8 2 0 4-3 7-8 11z" fill="#c32a2e" stroke="#6d1518" />
            <path d="M1 8h4l2-4 2 8 2-4h4" fill="none" stroke="#f7d7d7" strokeWidth="1.500" />
          </svg>
          Polar ProTrainer 5 - [Curva]
        </Title>
        <WindowButtons>
          <WindowButton aria-label="Minimizar">
            <svg width="12" height="12"><path d="M1 8.500h10v3H1z" fill="#fff" stroke="#555" strokeWidth=".5" /></svg>
          </WindowButton>
          <WindowButton aria-label="Restaurar">
            <svg width="12" height="12" fill="none" stroke="#fff" strokeWidth="1.500"><path d="M4 3V1h7v7H9" /><path d="M1.500 3.500h7v7h-7zM4 6h2v2H4z" /></svg>
          </WindowButton>
          <WindowButton $close aria-label="Cerrar">
            <svg width="12" height="12"><path d="M2 2l8 8M10 2l-8 8" stroke="#fff" strokeWidth="3" /></svg>
          </WindowButton>
        </WindowButtons>
      </TitleBar>

      <MenuBar>
        <svg width="14" height="16" viewBox="0 0 14 16" aria-hidden="true">
          <path d="M0 5l4 1 4-1 3-2 3 1v9H0z" fill="#ffee10" />
          <path d="M0 5h2l1-1 2 1 3-1 2-2h2l2 2" fill="none" stroke="#c03a2a" strokeDasharray="2 1" />
        </svg>
        <MenuList>
          {MENUS.map((m) => <MenuItem key={m}>{m}</MenuItem>)}
        </MenuList>
        <MdiButtons>
          <MdiButton aria-label="Minimizar documento">
            <svg width="10" height="10"><path d="M2 8h6" stroke="#6e7f96" strokeWidth="2" /></svg>
          </MdiButton>
          <MdiButton aria-label="Restaurar documento">
            <svg width="10" height="10" fill="none" stroke="#6e7f96"><path d="M3.500 3V1.500h5v4H7M1.500 4.500h5v4h-5zM1 5h6" /></svg>
          </MdiButton>
          <MdiButton aria-label="Cerrar documento">
            <svg width="10" height="10"><path d="M2 2l6 6M8 2L2 8" stroke="#6e7f96" strokeWidth="2" /></svg>
          </MdiButton>
        </MdiButtons>
      </MenuBar>

      <Toolbar>
        {TOOLS.map((group, i) => (
          <ToolGroup key={i} $spaced={i === 0}>
            {group.map((t) => (
              <ToolButton key={t.name} $frame={t.frame} aria-label={t.name}>{t.icon}</ToolButton>
            ))}
          </ToolGroup>
        ))}
      </Toolbar>

      <Chart />

      <InfoRow>
        <ValueList>
          <Value>Valores del cursor:</Value>
          <Value>Tiempo: 1:20:30</Value>
          <Value $color={HR}>FC: 178 ppm</Value>
          <Value $color={HR}>Calorías: 944 kcal/60min</Value>
          <Value $color={PACE}>Ritmo: 4:36 min/km</Value>
        </ValueList>
        <ValueList>
          <Value>Distancia: 15.099 km</Value>
          <Value $color={ALT}>Altitud: 26 m</Value>
          <Value>Subida: 60 m</Value>
          <Value>Bajada: 60 m</Value>
        </ValueList>
        <SlopeTable>
          <colgroup><col width="20" /><col width="60" /><col width="61" /><col width="90" /><col width="61" /></colgroup>
          <tbody>
            {SLOPES.map((s) => (
              <tr key={s.name}>
                <td>
                  <svg width="16" height="14" role="img" aria-label={s.name}><path d={s.d} fill="none" stroke="#000" /></svg>
                </td>
                {s.cells.map((c, i) => <td key={i}>{c}</td>)}
              </tr>
            ))}
          </tbody>
        </SlopeTable>
        <Legend>
          <svg width="41" height="8" aria-hidden="true">
            <path d="M0 4.500h41" stroke="#4fa0b8" />
            <path d="M12 0h6v8h-6z" fill="#3d9af5" />
          </svg>
          Ritmo [min/km]
        </Legend>
      </InfoRow>

      <Summary>
        <colgroup>{COLUMNS.map((w, i) => <col key={i} width={w} />)}</colgroup>
        <tbody>
          <tr>
            <th scope="row">Persona</th><td>jose antonio nafria melero</td>
            <th scope="row">Fecha</th><td>22/12/2010</td>
            <th scope="row">Frecuencia cardíaca<Swatch $color="#d0383a" $thin /></th>
            <Centered>167 / 178</Centered><Blank /><td />
          </tr>
          <tr>
            <th scope="row">Ejercicio</th><td>cdc 15k</td>
            <th scope="row">Hora</th><td>9:12:59</td>
            <th scope="row">Ritmo<Swatch $color="#2c52a6" /></th>
            <Centered>5:18 / 4:36</Centered><Blank /><td />
          </tr>
          <tr>
            <th scope="row">Deporte</th><td>Potencia aeróbica</td>
            <th scope="row">Duración</th><td>1:20:34.6</td>
            <th scope="row">Cadencia<Swatch $color="#17794f" /></th>
            <Centered>85 / 89</Centered><Blank /><td />
          </tr>
          <tr>
            <th /><td />
            <th scope="row">Distancia</th><td>15.1 km</td>
            <th scope="row">Índice de carrera</th>
            <Centered>49</Centered><Blank /><td />
          </tr>
          <tr>
            <th scope="row" rowSpan={2}>Nota</th><td colSpan={3} rowSpan={2} />
            <th scope="row">Subida</th>
            <Centered>55 (-0.2%)</Centered><Blank /><td />
          </tr>
          <tr>
            <th scope="row">Selección</th>
            <td colSpan={3}>0:00:00 - 1:20:30 (1:20:30 / 15.1 km)</td>
          </tr>
        </tbody>
      </Summary>
      <TaskbarEdge />
    </Page>
  );
}
